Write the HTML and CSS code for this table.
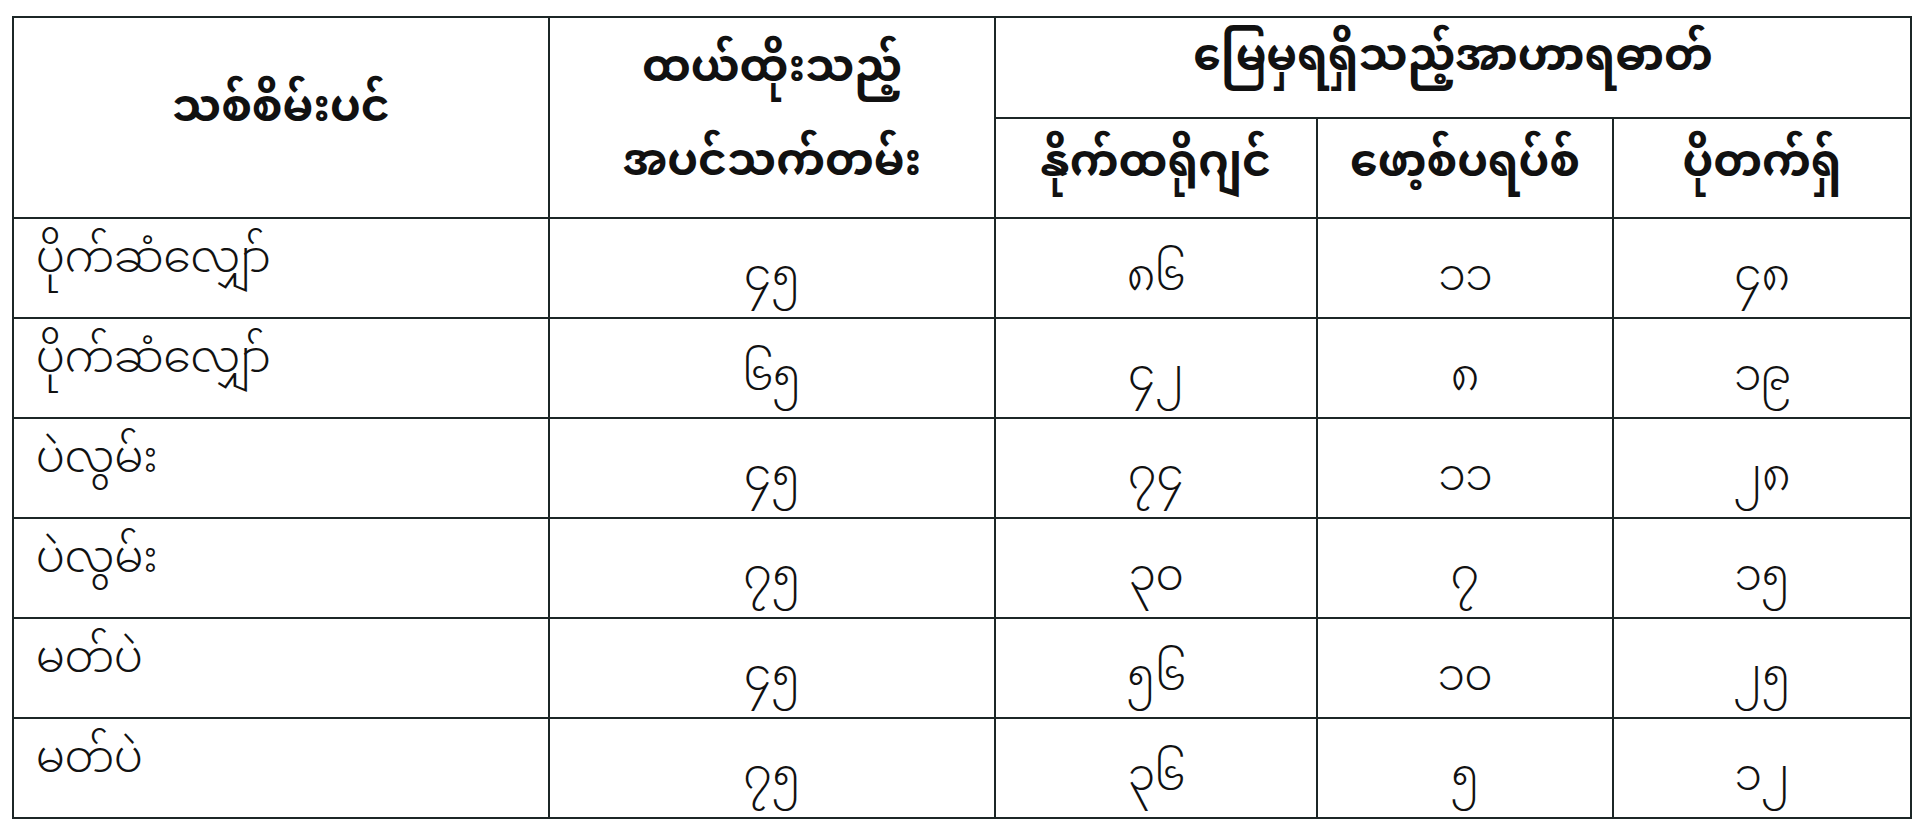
FILE: index.html
```html
<!DOCTYPE html>
<html lang="my">
<head>
<meta charset="utf-8">
<link rel="stylesheet" href="styles.css">
</head>
<body>
<table class="grid">
  <colgroup>
    <col class="c1"><col class="c2"><col class="c3"><col class="c4"><col class="c5">
  </colgroup>
  <thead>
    <tr class="h1">
      <th rowspan="2" class="name-h">သစ်စိမ်းပင်</th>
      <th rowspan="2" class="age-h"><span class="line">ထယ်ထိုးသည့်</span><span class="line">အပင်သက်တမ်း</span></th>
      <th colspan="3" class="group-h">မြေမှရရှိသည့်အာဟာရဓာတ်</th>
    </tr>
    <tr class="h2">
      <th class="sub-h">နိုက်ထရိုဂျင်</th>
      <th class="sub-h">ဖော့စ်ပရပ်စ်</th>
      <th class="sub-h">ပိုတက်ရှ်</th>
    </tr>
  </thead>
  <tbody>
    <tr><td class="name">ပိုက်ဆံလျှော်</td><td class="num">၄၅</td><td class="num">၈၆</td><td class="num">၁၁</td><td class="num">၄၈</td></tr>
    <tr><td class="name">ပိုက်ဆံလျှော်</td><td class="num">၆၅</td><td class="num">၄၂</td><td class="num">၈</td><td class="num">၁၉</td></tr>
    <tr><td class="name">ပဲလွမ်း</td><td class="num">၄၅</td><td class="num">၇၄</td><td class="num">၁၁</td><td class="num">၂၈</td></tr>
    <tr><td class="name">ပဲလွမ်း</td><td class="num">၇၅</td><td class="num">၃၀</td><td class="num">၇</td><td class="num">၁၅</td></tr>
    <tr><td class="name">မတ်ပဲ</td><td class="num">၄၅</td><td class="num">၅၆</td><td class="num">၁၀</td><td class="num">၂၅</td></tr>
    <tr><td class="name">မတ်ပဲ</td><td class="num">၇၅</td><td class="num">၃၆</td><td class="num">၅</td><td class="num">၁၂</td></tr>
  </tbody>
</table>
</body>
</html>
```
FILE: styles.css
```css
html, body {
  margin: 0;
  padding: 0;
  background: #ffffff;
}
body {
  padding: 16px 0 0 12px;
  font-family: "Noto Sans Myanmar", "Padauk", "Myanmar Text", "Pyidaungsu", "Noto Sans", sans-serif;
  color: #111;
}
.grid {
  border-collapse: collapse;
  table-layout: fixed;
  width: 1898px;
}
.grid .c1 { width: 536px; }
.grid .c2 { width: 446px; }
.grid .c3 { width: 322px; }
.grid .c4 { width: 296px; }
.grid .c5 { width: 298px; }
.grid th, .grid td {
  border: 2px solid #1c2626;
  padding: 0;
  text-align: center;
  vertical-align: middle;
  font-size: 44px;
  line-height: 1.2;
  white-space: nowrap;
}
.grid th {
  font-weight: bold;
}
.h1 { height: 101px; }
.h2 { height: 100px; }
.grid tbody tr { height: 100px; }
.grid td {
  font-weight: 300;
}
.grid th.name-h {
  padding-bottom: 12px;
}
.grid th.group-h {
  padding-bottom: 14px;
}
.grid th.sub-h {
  padding-bottom: 4px;
}
.age-h .line {
  display: block;
  line-height: 94px;
}
.age-h {
  padding-bottom: 18px;
}
.grid td.name {
  text-align: left;
  padding-left: 22px;
  padding-bottom: 12px;
}
.grid td.num {
  padding-top: 24px;
}
```
